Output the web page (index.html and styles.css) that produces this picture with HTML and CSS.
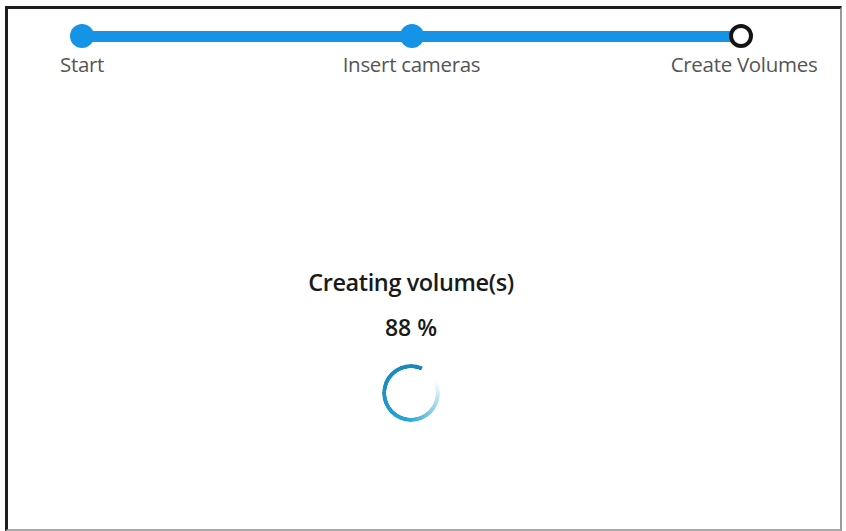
FILE: index.html
```html
<!DOCTYPE html>
<html lang="en">
<head>
<meta charset="utf-8">
<title>Create Volumes</title>
<link rel="stylesheet" href="styles.css">
</head>
<body>
  <div class="frame">
    <div class="stepper">
      <div class="step done">
        <span class="dot"></span>
        <span class="label">Start</span>
      </div>
      <div class="connector"></div>
      <div class="step done">
        <span class="dot"></span>
        <span class="label">Insert cameras</span>
      </div>
      <div class="connector"></div>
      <div class="step current">
        <span class="dot"></span>
        <span class="label">Create Volumes</span>
      </div>
    </div>

    <div class="progress">
      <div class="title">Creating volume(s)</div>
      <div class="percent">88 %</div>
      <div class="spinner"></div>
    </div>
  </div>
</body>
</html>
```

FILE: styles.css
```css
html, body {
  margin: 0;
  height: 100%;
  background: #ffffff;
}

body {
  font-family: "Open Sans", "Noto Sans", sans-serif;
}

.frame {
  box-sizing: border-box;
  margin: 6px 4px 0 5px;
  height: calc(100% - 6px);
  border-top: 3px solid #1c1c1c;
  border-left: 3px solid #1c1c1c;
  border-right: 2px solid #9a9a9a;
  border-bottom: 2px solid #a8a8a8;
}

/* wizard progress track */
.stepper {
  display: flex;
  align-items: flex-start;
  width: 683px;
  margin: 15px 0 0 62px;
}

.step {
  width: 24px;
  display: flex;
  flex-direction: column;
  align-items: center;
  flex: none;
}

.dot {
  box-sizing: border-box;
  width: 24px;
  height: 24px;
  border-radius: 50%;
  background: #1593e6;
}

.step.current .dot {
  background: #ffffff;
  border: 4px solid #141414;
}

.label {
  white-space: nowrap;
  margin-top: 3px;
  font-size: 20.5px;
  line-height: 26px;
  color: #555555;
  letter-spacing: -0.3px;
}

.step.current .label {
  margin-left: 6px;
}

.connector {
  flex: 1;
  height: 11px;
  margin: 7px -2px 0;
  background: #1593e6;
}

/* central status block */
.progress {
  display: flex;
  flex-direction: column;
  align-items: center;
  margin: 189px 0 0;
  padding-right: 26px;
}

.title {
  font-size: 23.5px;
  font-weight: 600;
  line-height: 32px;
  color: #1a1a1a;
  letter-spacing: -0.4px;
}

.percent {
  margin-top: 14px;
  font-size: 23px;
  font-weight: 600;
  line-height: 30px;
  color: #1a1a1a;
}

.spinner {
  margin-top: 22px;
  width: 58px;
  height: 58px;
  border-radius: 50%;
  background: conic-gradient(from 65deg,
      rgba(40, 170, 215, 0) 0deg,
      rgba(40, 170, 215, 0.35) 40deg,
      #29a6d6 120deg,
      #1a8fc2 220deg,
      #1786b8 318deg,
      rgba(23, 134, 184, 0) 320deg);
  -webkit-mask: radial-gradient(circle, transparent 24.5px, #000 25px);
  mask: radial-gradient(circle, transparent 24.5px, #000 25px);
}
```
